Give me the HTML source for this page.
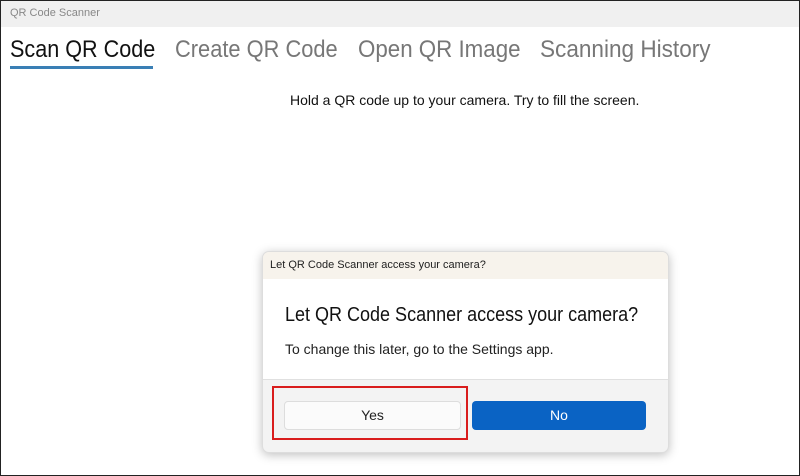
<!DOCTYPE html><html><head><style>
body{margin:0;width:800px;height:476px;overflow:hidden;background:#fff;font-family:"Liberation Sans",sans-serif;position:relative}
.abs{position:absolute;white-space:nowrap}
.t{transform-origin:0 0}
</style></head><body>
<div class="abs" style="left:0;top:0;width:798px;height:474px;border:1px solid #222;"></div>
<div class="abs" style="left:1px;top:1px;width:798px;height:26px;background:#f0f0f0"></div>
<div class="abs" style="left:10px;top:7px;font-size:11px;color:#888">QR Code Scanner</div>
<div class="abs t" style="left:10px;top:36px;font-size:24px;color:#111;transform:scaleX(0.9)">Scan QR Code</div>
<div class="abs" style="left:10px;top:66px;width:143px;height:3px;background:#3a7fb5"></div>
<div class="abs t" style="left:175px;top:36px;font-size:24px;color:#777;transform:scaleX(0.91)">Create QR Code</div>
<div class="abs t" style="left:358px;top:36px;font-size:24px;color:#777;transform:scaleX(0.93)">Open QR Image</div>
<div class="abs t" style="left:540px;top:36px;font-size:24px;color:#777;transform:scaleX(0.94)">Scanning History</div>
<div class="abs" style="left:290px;top:92px;font-size:14px;color:#111">Hold a QR code up to your camera. Try to fill the screen.</div>
<div class="abs" style="left:262px;top:251px;width:407px;height:202px;border-radius:7px;background:#f3f3f3;box-shadow:0 2px 10px rgba(0,0,0,.25);overflow:hidden;border:1px solid #ddd;box-sizing:border-box">
<div style="height:27px;background:#f7f3ec;font-size:11px;color:#222;padding-left:7px;line-height:27px">Let QR Code Scanner access your camera?</div>
<div style="height:100px;background:#fff;border-bottom:1px solid #e0e0e0;position:relative">
<div class="abs t" style="left:22px;top:25px;font-size:20px;color:#111;transform:scaleX(0.9)">Let QR Code Scanner access your camera?</div>
<div class="abs" style="left:22px;top:62px;font-size:14px;color:#222">To change this later, go to the Settings app.</div>
</div></div>
<div class="abs" style="left:284px;top:401px;width:177px;height:29px;background:#fbfbfb;border:1px solid #ddd;box-sizing:border-box;border-radius:4px;text-align:center;line-height:27px;font-size:14px;color:#222">Yes</div>
<div class="abs" style="left:472px;top:401px;width:174px;height:29px;background:#0a63c4;border-radius:4px;text-align:center;line-height:29px;font-size:14px;color:#fff">No</div>
<div class="abs" style="left:272px;top:386px;width:196px;height:54px;border:2px solid #d91c1c;box-sizing:border-box"></div>
</body></html>
